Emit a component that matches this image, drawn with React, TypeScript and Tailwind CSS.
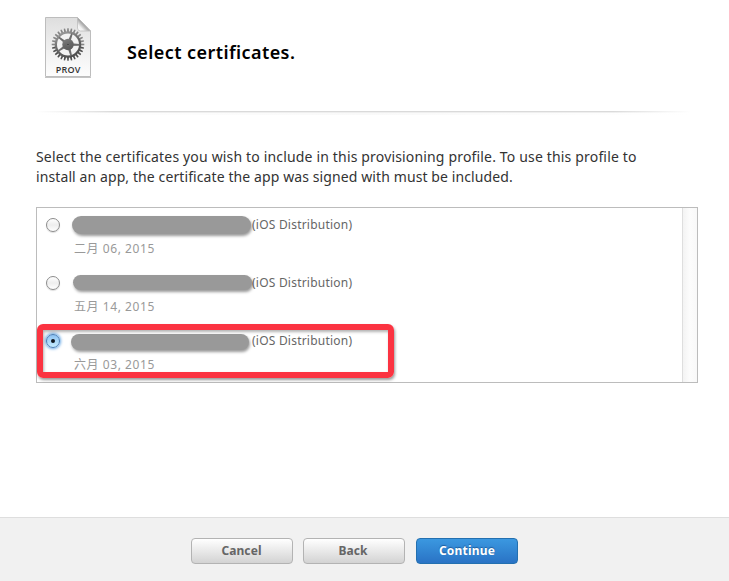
const teeth = Array.from({ length: 28 }, (_, i) => (i * 360) / 28);
const spokes = [20, 92, 164, 236, 308];

function ProvIcon() {
  return (
    <svg className="block h-[66px] w-[52px]" viewBox="42 14 52 66">
      <defs>
        <linearGradient id="page" x1="0" y1="0" x2="0" y2="1">
          <stop offset="0" stopColor="#dedede" />
          <stop offset="0.5" stopColor="#efefef" />
          <stop offset="1" stopColor="#fdfdfd" />
        </linearGradient>
        <linearGradient id="fold" x1="0" y1="1" x2="1" y2="0">
          <stop offset="0" stopColor="#ffffff" />
          <stop offset="0.25" stopColor="#f0f0f0" />
          <stop offset="0.5" stopColor="#9c9c9c" />
        </linearGradient>
        <linearGradient id="gear" gradientUnits="userSpaceOnUse" x1="60" y1="30" x2="74" y2="60">
          <stop offset="0" stopColor="#a5a5a5" />
          <stop offset="0.5" stopColor="#666" />
          <stop offset="1" stopColor="#484848" />
        </linearGradient>
      </defs>
      <path d="M45 77.500H91" stroke="#c4c4c4" />
      <path d="M45.500 17.500H77.500L90.500 31V76.500H45.500Z" fill="url(#page)" stroke="#bdbdbd" />
      <g>
        {teeth.map((a) => (
          <path key={a} d="M66.900 33L67.300 28.200H68.700L69.100 33Z" fill={a > 90 && a < 260 ? "#505050" : "#858585"} transform={`rotate(${a} 68 44.500)`} />
        ))}
        <circle cx="68" cy="44.500" r="12.100" fill="#f2f2f2" stroke="url(#gear)" strokeWidth="2.200" />
        {spokes.map((a) => (
          <path key={a} d="M66.500 44L67.200 33H68.800L69.500 44Z" fill="#6c6c6c" transform={`rotate(${a} 68 44.500)`} />
        ))}
        <circle cx="68" cy="44.500" r="5.700" fill="url(#gear)" />
        <circle cx="68" cy="44.500" r="1.300" fill="#444" stroke="#808080" strokeWidth="0.6" />
      </g>
      <path d="M77.500 17.500V28Q77.500 31 80.500 31H90.500Z" fill="url(#fold)" stroke="#bdbdbd" strokeWidth="0.8" />
      <text x="68" y="73.200" textAnchor="middle" fontSize="9" fontWeight="600" fill="#333" textLength="24.500" fontFamily="'Open Sans', sans-serif">
        PROV
      </text>
    </svg>
  );
}

function Radio({ checked }: { checked?: boolean }) {
  return checked ? (
    <span className="flex size-[14px] items-center justify-center rounded-full border border-[#4a7fb8] bg-linear-to-b from-[#8fc3f2] to-[#c5ecff] shadow-[0_0_3px_1px_#69a9e5]">
      <span className="size-1 rounded-full bg-[#101820]" />
    </span>
  ) : (
    <span className="block size-[14px] rounded-full border border-[#8c8c8c] bg-linear-to-b from-white via-[#eeeeee] to-white shadow-[0_1px_1px_#ddd]" />
  );
}

const rows = [
  { date: "二月 06, 2015", bar: "left-[35px] top-[8px] h-[18px] w-[179px]" },
  { date: "五月 14, 2015", bar: "left-[36px] top-[9px] h-[15px] w-[179px]" },
  { date: "六月 03, 2015", bar: "left-[34px] top-[10px] h-[16px] w-[178px]", checked: true },
];

const button = "flex h-[26px] w-[102px] items-center justify-center rounded-[4px] border pb-px text-[12px] font-bold";

export default function App() {
  return (
    <div className="flex h-[581px] w-[729px] flex-col overflow-hidden bg-white font-['Noto_Sans','Noto_Sans_CJK_SC',sans-serif]">
      <header className="flex h-[111px] pt-[14px] pl-[42px]">
        <ProvIcon />
        <h1 className="mt-[25px] ml-[33px] text-[18px] leading-[26px] font-semibold tracking-[0.42px] whitespace-nowrap text-black">Select certificates.</h1>
      </header>
      <div className="mr-[38px] ml-[36px] h-px bg-[linear-gradient(to_right,#fff,#dadada_12%,#dadada_88%,#fff)]" />
      <div className="mr-[38px] ml-[36px] h-px bg-[linear-gradient(to_right,#fff,#efefef_12%,#efefef_88%,#fff)]" />
      <div className="mr-[38px] ml-[36px] h-[2px] bg-linear-to-r from-white via-[#f9f9f9] to-white" />
      <p className="mt-[32px] ml-[36px] h-10 text-[14px] leading-5 whitespace-nowrap text-[#333]">
        <span className="block tracking-[0.165px]">Select the certificates you wish to include in this provisioning profile. To use this profile to</span>
        <span className="block tracking-[0.1px]">install an app, the certificate the app was signed with must be included.</span>
      </p>
      <section className="relative mt-[20px] ml-[36px] flex h-[176px] w-[662px] border border-[#bcbcbc]">
        <ul className="w-[645px]">
          {rows.map((row) => (
            <li key={row.date} className="relative flex h-[58px] pl-[9px]">
              <div className="pt-[10px]">
                <Radio checked={row.checked} />
              </div>
              <div className="ml-[14px] text-[12px] leading-6 whitespace-nowrap">
                <div className="mt-[5px] pl-[178px] tracking-[0.22px] text-[#666]">(iOS Distribution)</div>
                <div className="tracking-[0.56px] text-[#999]">{row.date}</div>
              </div>
              <span className={`absolute rounded-full bg-[#999] shadow-[1px_2px_3px_rgba(0,0,0,0.4)] ${row.bar}`} />
            </li>
          ))}
        </ul>
        <div className="w-[15px] border-l border-[#dedede] bg-linear-to-r from-[#f3f3f3] via-[#fcfcfc] to-[#f8f8f8]" />
        <div className="absolute top-[116px] left-0 h-[54px] w-[357px] rounded-[6px] border-[6px] border-[#fb3341] shadow-[1px_2px_3px_rgba(0,0,0,0.4),inset_1px_2px_3px_rgba(0,0,0,0.3)]" />
      </section>
      <footer className="mt-auto flex h-16 gap-[10px] border-t border-[#dedede] bg-[#f1f1f1] pt-5 pl-[191px]">
        <button className={`${button} border-[#b3b3b3] bg-linear-to-b from-white to-[#d3d3d3] pr-px tracking-[0.1px] text-[#666]`}>Cancel</button>
        <button className={`${button} border-[#b3b3b3] bg-linear-to-b from-white to-[#d3d3d3] pr-[2px] text-[#666]`}>Back</button>
        <button className={`${button} ml-px border-[#2370b0] bg-linear-to-b from-[#3b98e0] to-[#2a73c5] tracking-[0.2px] text-white [text-shadow:0_-1px_1px_#1c5c9c]`}>Continue</button>
      </footer>
    </div>
  );
}
